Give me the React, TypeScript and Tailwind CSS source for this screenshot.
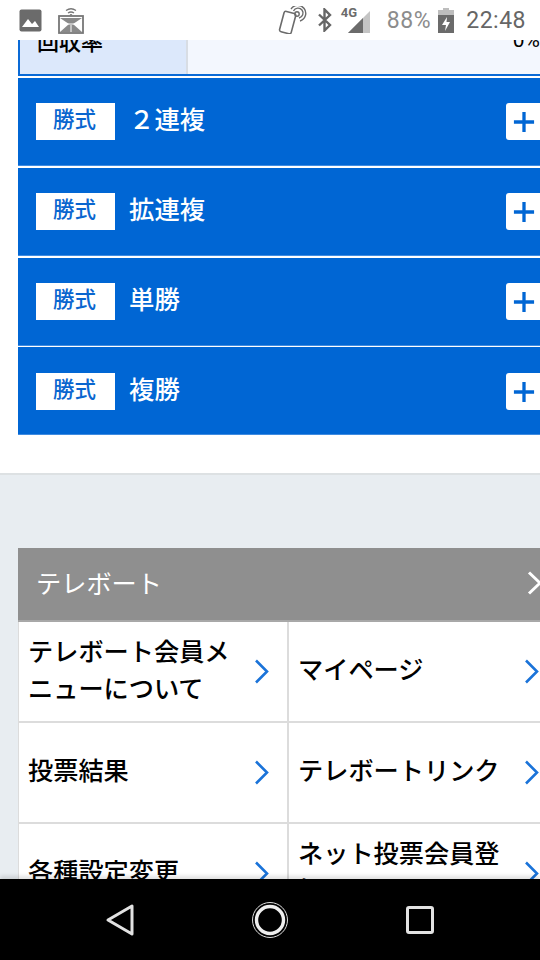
const JP = { fontFamily: '"Noto Sans CJK JP", "Noto Sans", sans-serif' };

function Chevron({ color = "#1a73d9", className = "" }: { color?: string; className?: string }) {
  return (
    <svg width="15" height="25" viewBox="0 0 15 25" className={className} fill="none">
      <path d="M2 1.5 L13 12.5 L2 23.5" stroke={color} strokeWidth="2.6" />
    </svg>
  );
}

function BetRow({ label, low }: { label: string; low?: boolean }) {
  return (
    <div className={`h-[88px] bg-[#0066d4] flex items-start pl-[18px] shrink-0 border-b border-[#3f8be0] ${low ? "pt-[26px]" : "pt-[25px]"}`}>
      <div className="w-[79px] h-[37px] bg-white flex items-center justify-center pb-[6px] pr-[2px] text-[#0a66cf] text-[21.5px] font-medium shrink-0">
        勝式
      </div>
      <div className="text-white text-[25.4px] leading-[30px] flex-1 ml-[14px] font-medium">{label}</div>
      <div className="w-[34px] h-[37px] bg-white rounded-l-[3px] flex items-center justify-center shrink-0">
        <svg width="22" height="22" viewBox="0 0 24 24" className="ml-[2px]">
          <path d="M12 1 V23 M1 12 H23" stroke="#0066d4" strokeWidth="3.6" />
        </svg>
      </div>
    </div>
  );
}

function MenuCell({ lines, right }: { lines: string[]; right?: boolean }) {
  return (
    <div className={`h-[101px] w-[270px] bg-white flex items-center pl-[9px] border-b-2 border-[#dcdcdc] ${right ? "" : "border-r-2"}`}>
      <div className="flex-1 text-black text-[25.2px] leading-[37px] pb-[6px] whitespace-nowrap font-medium">
        {lines.map((l) => (
          <div key={l}>{l}</div>
        ))}
      </div>
      <Chevron className={right ? "mr-[20px]" : "mr-[18px]"} />
    </div>
  );
}

export default function App() {
  return (
    <div className="w-[540px] h-[960px] flex flex-col overflow-hidden bg-white" style={JP}>
      <div className="h-10 shrink-0 bg-white flex items-center pl-[19px] pr-[14px] relative z-10">
        <svg width="23" height="23" viewBox="0 0 23 23">
          <rect x="0.5" y="0.5" width="22" height="22" rx="2" fill="#6b6b6b" />
          <path d="M3 18 L9 10 L13 15 L16 12 L20 18 Z" fill="#fff" />
        </svg>
        <svg width="26" height="27" viewBox="0 0 26 27" className="ml-[16px]">
          <path d="M8 3.5 Q13 0 18 3.5 M10 6 Q13 4 16 6 M12 8 Q13 7.4 14 8" stroke="#777" strokeWidth="1.3" fill="none" />
          <rect x="1" y="9" width="24" height="17" fill="#fff" stroke="#777" strokeWidth="1.8" />
          <path d="M2 11 H24 L15 17 H11 Z M11 17 H15 L24 25 H2 Z" fill="#8a8a8a" />
          <path d="M2 17 H24" stroke="#fff" strokeWidth="1" />
          <path d="M13 18 V25" stroke="#fff" strokeWidth="1" />
        </svg>
        <div className="flex-1" />
        <svg width="31" height="28" viewBox="0 0 31 28" className="mr-[9px]">
          <rect x="4" y="9" width="12" height="21" rx="2" transform="rotate(15 10 19) translate(0 -3)" fill="none" stroke="#6b6b6b" strokeWidth="1.6" />
          <circle cx="20" cy="8" r="2.2" fill="none" stroke="#6b6b6b" strokeWidth="1.4" />
          <path d="M14 3 A8 8 0 1 1 23 15" fill="none" stroke="#6b6b6b" strokeWidth="1.4" />
          <path d="M16.5 5 A5 5 0 1 1 22 12" fill="none" stroke="#6b6b6b" strokeWidth="1.4" />
        </svg>
        <svg width="16" height="24" viewBox="0 0 16 24" className="mr-[8px]">
          <path d="M2 6.5 L13 17 L7.5 22.5 V1.5 L13 7 L2 17.5" fill="none" stroke="#666" strokeWidth="2.4" />
        </svg>
        <div className="relative w-[31px] h-[26px] mr-[15px]">
          <span className="absolute left-0 -top-[1px] text-[13px] leading-[14px] font-bold text-[#6b6b6b]" style={{ fontFamily: '"Roboto", sans-serif' }}>
            4G
          </span>
          <svg width="26" height="24" viewBox="0 0 26 24" className="absolute right-0 top-[2px]">
            <path d="M2 24 L24 2 V24 Z" fill="#c4c4c4" />
            <path d="M2 24 L17 9 V24 Z" fill="#6b6b6b" />
          </svg>
        </div>
        <span className="text-[23px] text-[#8c8c8c] leading-none mr-[7px]" style={{ fontFamily: '"Roboto", sans-serif', letterSpacing: "0.6px" }}>
          88%
        </span>
        <svg width="16" height="25" viewBox="0 0 16 25" className="mr-[12px]">
          <path d="M5 0 H11 V2 H16 V8 H0 V2 H5 Z" fill="#bdbdbd" />
          <rect x="0" y="7" width="16" height="18" fill="#6b6b6b" />
          <path d="M9 9 L4 17 H8 L7 23 L12 14 H8.5 Z" fill="#fff" />
        </svg>
        <span className="text-[23px] text-[#666] leading-none" style={{ fontFamily: '"Roboto", sans-serif', letterSpacing: "0.5px" }}>
          22:48
        </span>
      </div>

      <main className="flex-1 overflow-hidden min-h-0 flex flex-col">
        <div className="ml-[18px] h-[36px] shrink-0 flex border-b-2 border-l-2 border-[#0a6ad6] bg-[#f3f7fe] overflow-hidden">
          <div className="w-[168px] bg-[#dce8fb] border-r-2 border-[#d8dde4] h-full relative overflow-hidden">
            <span className="absolute left-[17px] -top-[12px] text-[22px] leading-[24px] font-medium text-black">回収率</span>
          </div>
          <div className="flex-1 relative">
            <span className="absolute right-0 -top-[12px] text-[21px] leading-[24px] text-black" style={{ fontFamily: '"Roboto", sans-serif' }}>0%</span>
          </div>
        </div>
        <div className="h-[2px] shrink-0" />
        <div className="ml-[18px] shrink-0 flex flex-col gap-[2px]">
          <BetRow label="２連複" />
          <BetRow label="拡連複" />
          <BetRow label="単勝" />
          <div className="-mt-px">
            <BetRow label="複勝" low />
          </div>
        </div>

        <div className="h-[38px] shrink-0" />

        <div className="flex-1 bg-[#e8edf1] border-t-2 border-[#dde1e3] pt-[73px] pl-[18px] min-h-0 overflow-hidden">
          <div className="h-[74px] w-[522px] bg-[#8f8f8f] flex items-center pl-[18px] pb-[2px] border-b-2 border-[#a8a8a8]">
            <span className="text-white text-[25.2px] flex-1">テレボート</span>
            <svg width="13" height="24" viewBox="0 0 13 24" fill="none">
              <path d="M2 1.5 L13 12 L2 22.5" stroke="#fff" strokeWidth="3" />
            </svg>
          </div>
          <div className="grid grid-cols-[270px_270px] w-[541px] border-l border-[#dcdcdc]">
            <MenuCell lines={["テレボート会員メ", "ニューについて"]} />
            <MenuCell right lines={["マイページ"]} />
            <MenuCell lines={["投票結果"]} />
            <MenuCell right lines={["テレボートリンク"]} />
            <MenuCell lines={["各種設定変更"]} />
            <MenuCell right lines={["ネット投票会員登", "録"]} />
          </div>
        </div>
      </main>

      <nav className="h-[81px] shrink-0 bg-black flex items-center relative shadow-[0_-3px_4px_rgba(0,0,0,0.12)]">
        <div className="w-[240px] flex justify-end pr-[105px]">
          <svg width="30" height="34" viewBox="0 0 30 34" fill="none">
            <path d="M27 3 V31 L3 17 Z" stroke="#e2e2e2" strokeWidth="3" strokeLinejoin="round" />
          </svg>
        </div>
        <div className="w-[60px] flex justify-center">
          <svg width="36" height="38" viewBox="0 0 36 38" fill="none">
            <circle cx="18" cy="19" r="17.5" stroke="#ddd" strokeWidth="1" />
            <circle cx="18" cy="19" r="13.5" stroke="#eee" strokeWidth="3.4" />
          </svg>
        </div>
        <div className="flex-1 pl-[106px]">
          <svg width="28" height="28" viewBox="0 0 28 28" fill="none">
            <rect x="1.5" y="1.5" width="25" height="25" rx="1.5" stroke="#e2e2e2" strokeWidth="3" />
          </svg>
        </div>
      </nav>
    </div>
  );
}
